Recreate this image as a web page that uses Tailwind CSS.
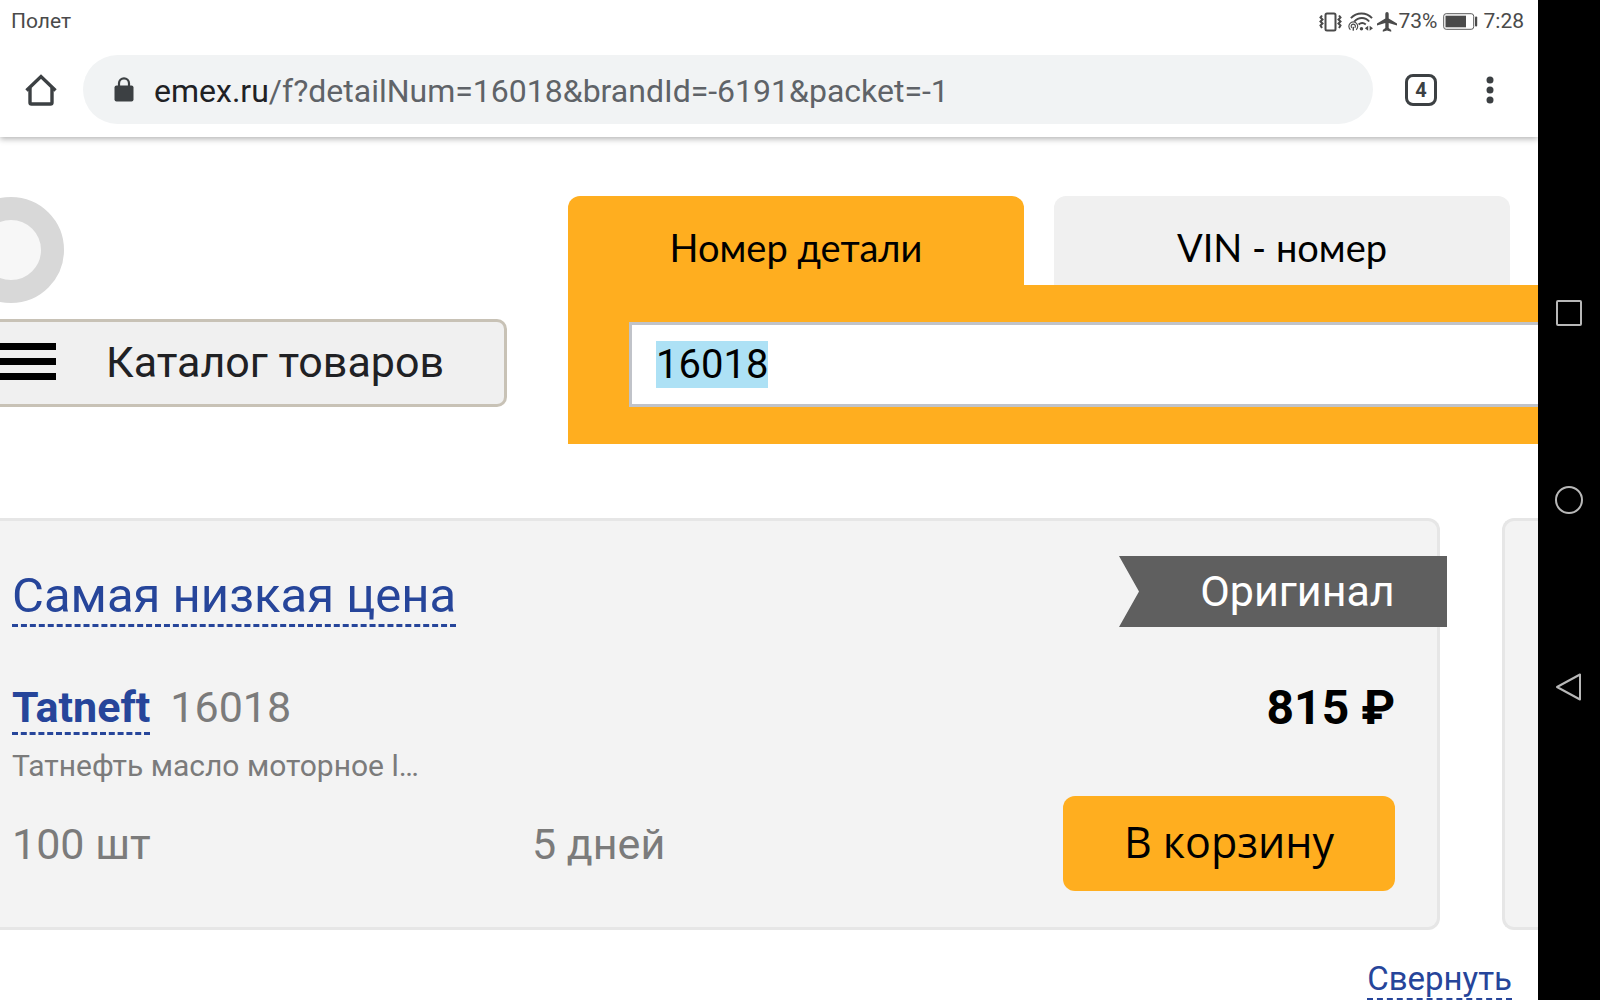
<!DOCTYPE html>
<html lang="ru">
<head>
<meta charset="utf-8">
<meta name="viewport" content="width=device-width, initial-scale=1">
<title>emex.ru</title>
<script src="https://cdn.jsdelivr.net/npm/@tailwindcss/browser@4"></script>
</head>
<body class="flex h-screen overflow-hidden bg-white font-[Roboto,sans-serif] text-black">
<div class="flex min-w-0 flex-1 flex-col overflow-hidden">

  <!-- Status bar -->
  <div class="relative z-20 flex h-[55px] shrink-0 items-start justify-between bg-white pt-2 pr-[14px] pl-[11px] text-[21px] leading-[27px] text-[#4a4a4a]">
    <span>Полет</span>
    <div class="flex items-center">
      <svg class="h-[20px] w-[25px]" viewBox="0 0 25 20" fill="none" stroke="#4a4a4a" stroke-width="2" aria-hidden="true"><rect x="7.500" y="1.500" width="10" height="17" rx="1.500"/><path d="M4 3.500 2.500 5.500 4.500 7.500 2.500 9.500 4.500 11.500 2.500 13.500 4 16M21 3.500l1.500 2-2 2 2 2-2 2 2 2-1.500 2.500" stroke-width="2"/></svg>
      <svg class="ml-[5px] h-[20px] w-[25px]" viewBox="0 0 26 20" fill="none" stroke="#4a4a4a" aria-hidden="true"><path d="M3 6C9-.5 19-.5 25 6M6.500 9.500c4.500-5 11.500-5 15.500 0M11 12.500c2.500-2 5-2 7.500 0" stroke-width="2"/><path d="M2.500 18a4.600 4.600 0 1 1 6 0M4 16a2.200 2.200 0 1 1 3 0" stroke-width="1.200"/><path d="M5.500 15v4" stroke-width="1.500"/><circle cx="14" cy="17" r="1.800" fill="#4a4a4a" stroke="none"/><path d="m21 14-3.500 2.500L21 19zM22.500 14l3.500 2.500-3.500 2.500z" fill="#4a4a4a" stroke="none"/></svg>
      <svg class="ml-1 h-[20px] w-[20px]" viewBox="2 2 20 20" fill="#4a4a4a" aria-hidden="true"><path d="M22 15.500v-2l-8.300-5V3.700a1.700 1.700 0 0 0-3.400 0v4.800L2 13.500v2l8.300-2.500v5L7.800 20v1.700L12 20.600l4.200 1.100V20l-2.500-2v-5z"/></svg>
      <span class="ml-[2px]">73%</span>
      <svg class="ml-[5px] h-[17px] w-[35px]" viewBox="0 0 35 17" aria-hidden="true"><rect x=".7" y=".7" width="30" height="15.600" rx="2.500" fill="none" stroke="#5a5a5a" stroke-width="1"/><rect x="2.500" y="2.700" width="20.500" height="11.600" fill="#4a4a4a"/><rect x="32" y="3.500" width="2.200" height="10" rx="1" fill="#4a4a4a"/></svg>
      <span class="ml-[6px]">7:28</span>
    </div>
  </div>

  <!-- Browser toolbar -->
  <header class="relative z-10 flex h-[82px] shrink-0 items-start pb-[13px] shadow-[0_2px_6px_rgba(0,0,0,0.3)]">
    <button class="flex h-[69px] w-[82px] items-center justify-center" aria-label="Главная">
      <svg class="h-[32px] w-[32px]" viewBox="0 0 32 32" fill="none" stroke="#3c4043" stroke-width="3.400" aria-hidden="true"><path d="M5 14v14.500q0 1.500 1.500 1.500h19q1.500 0 1.500-1.500V14"/><path d="M1.500 16.500 16 2.500l14.500 14"/></svg>
    </button>
    <div class="ml-px flex h-[69px] flex-1 items-center rounded-full bg-[#f1f3f4] pl-[31px]">
      <svg class="h-[25px] w-[20px]" viewBox="0 0 20 25" aria-hidden="true"><rect x="0.500" y="8.500" width="19" height="16" rx="2" fill="#3c4043"/><path d="M5 10V6.300a5 5 0 0 1 10 0V10" fill="none" stroke="#3c4043" stroke-width="2.200"/></svg>
      <a href="#" class="ml-5 pt-[2px] text-[32px] leading-[40px] whitespace-nowrap text-[#5f6368]"><span class="text-[#202124]">emex.ru</span>/f?detailNum=16018&amp;brandId=-6191&amp;packet=-1</a>
    </div>
    <button class="ml-[32px] flex h-[69px] w-[32px] items-center justify-center" aria-label="Вкладки">
      <span class="flex h-[32px] w-[32px] items-center justify-center rounded-[8px] border-[3px] border-[#3c4043] text-[20px] leading-[24px] font-bold text-[#3c4043]">4</span>
    </button>
    <button class="mr-[22px] ml-[27px] flex h-[69px] w-[52px] items-center justify-center" aria-label="Меню">
      <svg class="h-[28px] w-[8px]" viewBox="0 0 8 28" fill="#3c4043" aria-hidden="true"><circle cx="4" cy="4" r="3.500"/><circle cx="4" cy="14" r="3.500"/><circle cx="4" cy="24" r="3.500"/></svg>
    </button>
  </header>

  <main class="flex-1">
    <!-- Site header -->
    <section class="flex gap-[61px] pt-[59px]">
      <div class="w-[507px] shrink-0">
        <div class="mt-px -ml-[42px] h-[106px] w-[106px] rounded-full border-[23px] border-[#d8d8d8] bg-[#f7f7f7]"></div>
        <button class="mt-4 flex h-[88px] w-full items-center rounded-r-[10px] border-[3px] border-l-0 border-[#c8c2b6] bg-[#f0f0f0] pb-[3px] text-[43px] leading-[48px] text-[#202124]">
          <span class="flex w-[56px] flex-col gap-2" aria-hidden="true"><span class="h-[7px] bg-black"></span><span class="h-[7px] bg-black"></span><span class="h-[7px] bg-black"></span></span>
          <span class="ml-[50px]">Каталог товаров</span>
        </button>
      </div>
      <div class="min-w-0 flex-1">
        <div class="flex gap-[30px] font-[Lato,sans-serif] text-[38px] leading-[48px]">
          <button class="h-[89px] w-[456px] rounded-t-[12px] bg-[#ffae1f] pt-3">Номер детали</button>
          <button class="h-[89px] w-[456px] rounded-t-[12px] bg-[#f0f0f0] pt-3">VIN - номер</button>
        </div>
        <div class="bg-[#ffae1f] py-[37px] pl-[61px]">
          <input id="num" type="text" value="16018" aria-label="Номер детали" autofocus class="block h-[85px] w-full border-[3px] border-r-0 border-[#c0c3c9] bg-white px-6 text-[40px] leading-[47px] text-black outline-none selection:bg-[#ade1f5] selection:text-black">
        </div>
      </div>
    </section>

    <!-- Offers -->
    <section class="mt-[74px] flex gap-[62px]">
      <article class="relative flex h-[412px] flex-1 flex-col rounded-r-[12px] border-[3px] border-l-0 border-[#e6e6e6] bg-[#f3f3f3] pl-3 text-[43px] leading-[50px] text-[#7b7b7b]">
        <div class="absolute top-[35px] -right-[10px] flex h-[71px] w-[328px] items-center justify-center bg-[#5f5f5f] pb-px pl-[29px] text-white [clip-path:polygon(0_0,100%_0,100%_100%,0_100%,20px_50%)]">Оригинал</div>
        <h2 class="mt-[47px] flex text-[49px] leading-[56px]"><a href="#" class="border-b-[3px] border-dashed border-[#26459a] text-[#26459a]">Самая низкая цена</a></h2>
        <div class="mt-[55px] flex items-start justify-between pr-[42px]">
          <div class="flex gap-5"><a href="#" class="border-b-[3px] border-dashed border-[#26459a] font-bold text-[#26459a]">Tatneft</a><span>16018</span></div>
          <strong class="-mt-px text-[48px] leading-[54px] text-black">815 ₽</strong>
        </div>
        <p class="mt-[11px] text-[30px] leading-[40px]">Татнефть масло моторное l…</p>
        <div class="mt-[10px] flex items-center pr-[42px]">
          <span class="w-[520px]">100 шт</span>
          <span>5 дней</span>
          <button class="ml-auto h-[95px] w-[332px] rounded-[12px] bg-[#ffae1f] pb-1 font-[Open_Sans,sans-serif] text-[43px] leading-[56px] text-black">В корзину</button>
        </div>
      </article>
      <article class="h-[412px] w-9 rounded-l-[12px] border-[3px] border-r-0 border-[#e6e6e6] bg-[#f3f3f3]"></article>
    </section>
    <div class="mt-[30px] flex justify-end pr-[26px]"><a href="#" class="border-b-2 border-dashed border-[#26459a] text-[33px] leading-[38px] text-[#26459a]">Свернуть</a></div>
  </main>
</div>

<!-- Device navigation -->
<nav class="flex w-[62px] shrink-0 flex-col justify-center bg-black" aria-label="Навигация">
  <button class="flex h-[187px] items-center justify-center" aria-label="Недавние"><svg class="h-[28px] w-[28px]" viewBox="0 0 28 28" fill="none" stroke="#b8b8b8" stroke-width="2" aria-hidden="true"><rect x="2" y="2" width="24" height="24" rx="1"/></svg></button>
  <button class="flex h-[187px] items-center justify-center" aria-label="Домой"><svg class="h-[28px] w-[28px]" viewBox="0 0 28 28" fill="none" stroke="#b8b8b8" stroke-width="2" aria-hidden="true"><circle cx="14" cy="14" r="13"/></svg></button>
  <button class="flex h-[187px] items-center justify-center" aria-label="Назад"><svg class="h-[28px] w-[28px]" viewBox="0 0 28 28" fill="none" stroke="#b8b8b8" stroke-width="2" stroke-linejoin="round" aria-hidden="true"><path d="M25 1.500v25L2 14z"/></svg></button>
</nav>
<script>
  const num = document.getElementById('num');
  num.focus();
  num.select();
</script>
</body>
</html>
